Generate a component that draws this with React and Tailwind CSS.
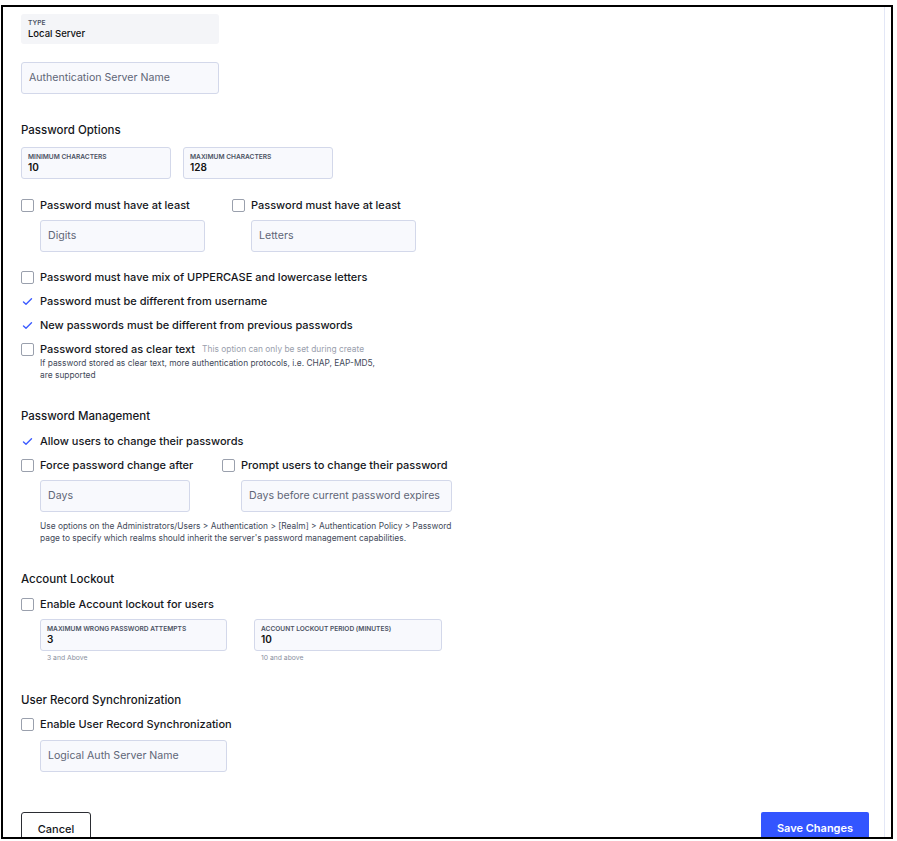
import React from 'react';

const font = { fontFamily: 'Inter, "Noto Sans", sans-serif' };

function Box({ className = '', children }) {
  return (
    <div className={`h-[32px] rounded-[3px] border border-[#d3d8ea] bg-[#f8f9fd] flex items-center px-[7px] ${className}`}>
      {children}
    </div>
  );
}

function Placeholder({ className, text }) {
  return (
    <Box className={className}>
      <span className="text-[10.6px] text-[#5f6677] whitespace-nowrap">{text}</span>
    </Box>
  );
}

function LabeledBox({ className, label, value }) {
  return (
    <div className={`h-[32px] rounded-[3px] border border-[#d3d8ea] bg-[#f8f9fd] flex flex-col justify-center px-[6px] ${className}`}>
      <span className="text-[6.6px] font-semibold uppercase text-[#4b5263] leading-[8px]">{label}</span>
      <span className="text-[10px] font-semibold text-[#111] leading-[13px]">{value}</span>
    </div>
  );
}

function Checkbox() {
  return <span className="w-[13px] h-[13px] rounded-[2px] border-[1.5px] border-[#9aa0ad] bg-white shrink-0" />;
}

function Check() {
  return (
    <svg width="13" height="13" viewBox="0 0 13 13" className="shrink-0">
      <path d="M2.5 7 L5 9.3 L10.5 3.8" fill="none" stroke="#3b5bff" strokeWidth="1.4" strokeLinecap="round" strokeLinejoin="round" />
    </svg>
  );
}

function Row({ checked, children, className = '' }) {
  return (
    <div className={`h-[24px] flex items-center gap-[6px] ${className}`}>
      {checked ? <Check /> : <Checkbox />}
      <span className="text-[11px] font-medium text-[#15171c] whitespace-nowrap">{children}</span>
    </div>
  );
}

function Heading({ children, className = '' }) {
  return <div className={`h-[16px] leading-[16px] text-[11.5px] font-medium text-[#15171c] ${className}`}>{children}</div>;
}

function Note({ children, className = '' }) {
  return <div className={`text-[8.4px] leading-[12px] text-[#434a5a] ${className}`}>{children}</div>;
}

export default function App() {
  return (
    <div className="h-[841px] bg-white overflow-hidden" style={font}>
      <div className="ml-[1px] mt-[5px] w-[892px] h-[834px] border-2 border-black overflow-hidden">
        <div className="h-full w-[882px] border-r border-[#e3e7f6] pl-[18px] pr-[15px] pt-[7px]">
          <div className="w-[198px] h-[30px] rounded-[3px] bg-[#f4f5f8] flex flex-col justify-center px-[7px]">
            <span className="text-[6.6px] font-semibold text-[#4b5263] leading-[8px]">TYPE</span>
            <span className="text-[9.5px] font-medium text-[#111] leading-[13px]">Local Server</span>
          </div>

          <Placeholder className="w-[198px] mt-[18px]" text="Authentication Server Name" />

          <Heading className="mt-[28px]">Password Options</Heading>
          <div className="flex gap-[12px] mt-[9px]">
            <LabeledBox className="w-[150px]" label="Minimum Characters" value="10" />
            <LabeledBox className="w-[150px]" label="Maximum Characters" value="128" />
          </div>

          <div className="flex mt-[14px]">
            <div className="w-[211px]">
              <Row>Password must have at least</Row>
              <Placeholder className="w-[165px] ml-[19px] mt-[3px]" text="Digits" />
            </div>
            <div>
              <Row>Password must have at least</Row>
              <Placeholder className="w-[165px] ml-[19px] mt-[3px]" text="Letters" />
            </div>
          </div>

          <Row className="mt-[13px]">Password must have mix of UPPERCASE and lowercase letters</Row>
          <Row checked>Password must be different from username</Row>
          <Row checked>New passwords must be different from previous passwords</Row>
          <div className="h-[24px] flex items-center gap-[6px]">
            <Checkbox />
            <span className="text-[11px] font-medium text-[#15171c]">Password stored as clear text</span>
            <span className="text-[8.4px] text-[#9aa0ad] ml-[1px]">This option can only be set during create</span>
          </div>
          <Note className="ml-[19px] -mt-[4px] w-[340px]">
            If password stored as clear text, more authentication protocols, i.e. CHAP, EAP-MD5, are supported
          </Note>

          <Heading className="mt-[27px]">Password Management</Heading>
          <Row checked className="mt-[5px]">Allow users to change their passwords</Row>
          <div className="flex">
            <div className="w-[201px]">
              <Row>Force password change after</Row>
              <Placeholder className="w-[150px] ml-[19px] mt-[3px]" text="Days" />
            </div>
            <div>
              <Row>Prompt users to change their password</Row>
              <Placeholder className="w-[211px] ml-[19px] mt-[3px]" text="Days before current password expires" />
            </div>
          </div>
          <Note className="ml-[19px] mt-[8px] w-[424px]">
            Use options on the Administrators/Users &gt; Authentication &gt; [Realm] &gt; Authentication Policy &gt; Password page to specify which realms should inherit the server's password management capabilities.
          </Note>

          <Heading className="mt-[27px]">Account Lockout</Heading>
          <Row className="mt-[5px]">Enable Account lockout for users</Row>
          <div className="flex gap-[27px] ml-[19px] mt-[3px]">
            <div>
              <LabeledBox className="w-[187px]" label="Maximum Wrong Password Attempts" value="3" />
              <div className="text-[6.8px] leading-[12px] text-[#8a90a0] ml-[7px] mt-[1px]">3 and Above</div>
            </div>
            <div>
              <LabeledBox className="w-[188px]" label="Account Lockout Period (Minutes)" value="10" />
              <div className="text-[6.8px] leading-[12px] text-[#8a90a0] ml-[7px] mt-[1px]">10 and above</div>
            </div>
          </div>

          <Heading className="mt-[28px]">User Record Synchronization</Heading>
          <Row className="mt-[4px]">Enable User Record Synchronization</Row>
          <Placeholder className="w-[187px] ml-[19px] mt-[4px]" text="Logical Auth Server Name" />

          <div className="flex justify-between mt-[40px]">
            <button className="w-[70px] h-[32px] rounded-[3px] border border-[#2b2d33] bg-white text-[11px] font-medium text-[#15171c] pt-[2px]">
              Cancel
            </button>
            <button className="w-[108px] h-[32px] rounded-[2px] bg-[#3355ff] text-[11px] font-semibold text-white">
              Save Changes
            </button>
          </div>
        </div>
      </div>
    </div>
  );
}
